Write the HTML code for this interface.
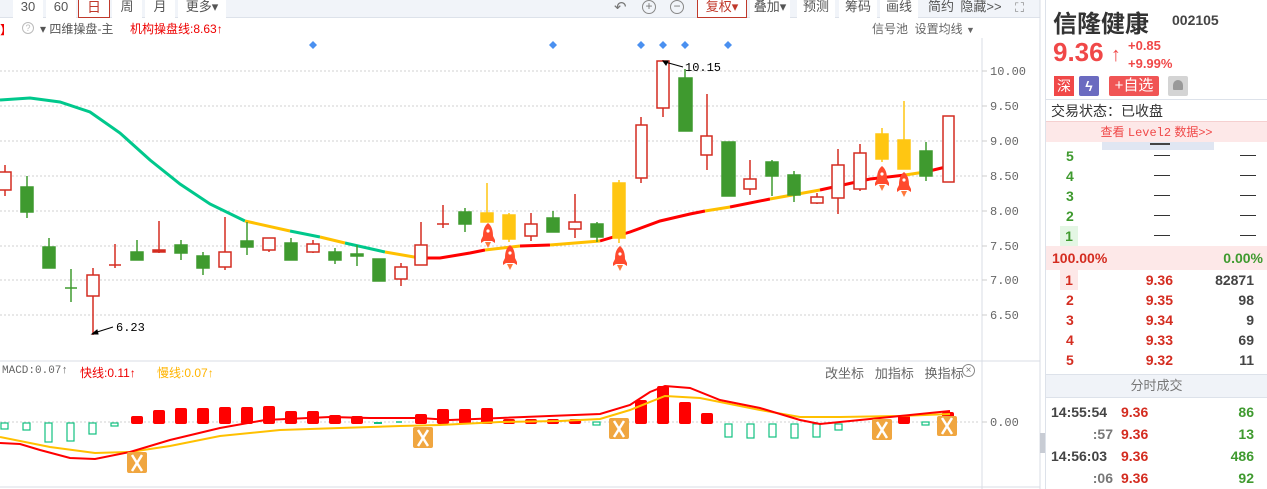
<!DOCTYPE html>
<html><head><meta charset="utf-8"><style>
*{margin:0;padding:0;box-sizing:border-box}
body{width:1267px;height:489px;overflow:hidden;background:#fff;font-family:"Liberation Sans","Noto Sans CJK SC",sans-serif;position:relative;color:#333}
.a{position:absolute;white-space:nowrap}
.tb{position:absolute;top:0;height:18px;background:#fff;font-size:13px;color:#555;text-align:center;line-height:14px}
.r{color:#d42c20}.g{color:#3f9a2f}
.row{position:absolute;left:1046px;width:221px;height:20px;font-size:14px;font-weight:bold;line-height:20px}
.row span{position:absolute}
</style></head><body>
<div class="a" style="left:0;top:0;width:1040px;height:18px;background:#f1f4f9;border-bottom:1px solid #dde2ea"></div>
<div class="tb" style="left:13px;width:30px">30</div>
<div class="tb" style="left:46px;width:30px">60</div>
<div class="tb" style="left:78px;width:32px;border:1px solid #c0392b;border-top:none;color:#c0392b;font-size:14px">日</div>
<div class="tb" style="left:112px;width:30px">周</div>
<div class="tb" style="left:145px;width:30px">月</div>
<div class="tb" style="left:178px;width:48px">更多▾</div>
<div class="a" style="left:614px;top:-2px;font-size:15px;color:#777">↶</div>
<div class="a" style="left:642px;top:0;width:14px;height:14px;border:1px solid #888;border-radius:50%;font-size:12px;line-height:11px;text-align:center;color:#777">+</div>
<div class="a" style="left:670px;top:0;width:14px;height:14px;border:1px solid #888;border-radius:50%;font-size:12px;line-height:11px;text-align:center;color:#777">−</div>
<div class="tb" style="left:697px;width:50px;border:1px solid #c0392b;border-top:none;color:#c0392b">复权▾</div>
<div class="tb" style="left:750px;width:40px">叠加▾</div>
<div class="tb" style="left:797px;width:38px">预测</div>
<div class="tb" style="left:839px;width:38px">筹码</div>
<div class="tb" style="left:880px;width:38px">画线</div>
<div class="tb" style="left:922px;width:38px;background:transparent">简约</div>
<div class="tb" style="left:958px;width:46px;background:transparent">隐藏&gt;&gt;</div>
<div class="a" style="left:1015px;top:0;font-size:13px;color:#888">⛶</div>
<div class="a" style="left:0;top:21px;font-size:12px;color:#e00">】</div>
<div class="a" style="left:22px;top:22px;width:12px;height:12px;border:1px solid #bbb;border-radius:50%;font-size:9px;color:#bbb;text-align:center;line-height:10px">?</div>
<div class="a" style="left:40px;top:20px;font-size:12px;color:#555">▾ 四维操盘-主</div>
<div class="a" style="left:130px;top:20px;font-size:12px;color:#e00">机构操盘线:8.63↑</div>
<div class="a" style="left:872px;top:20px;font-size:12px;color:#666">信号池&nbsp; 设置均线 <span style="font-size:9px">▼</span></div>
<svg class="a" style="left:0;top:0" width="1045" height="489">
<defs>
<g id="rk"><path d="M0 -11c4 3 5 8 5 13l2 4v3l-3-2h-8l-3 2v-3l2-4c0-5 1-10 5-13z" fill="#ff4a2e"/><circle cx="0" cy="-3" r="1.6" fill="#fff"/><path d="M-3 8h6l-3 6z" fill="#ff7a3e"/></g>
</defs>
<g stroke="#d0d0d0" stroke-dasharray="2,2" stroke-width="1">
<line x1="0" y1="71" x2="980" y2="71"/><line x1="0" y1="106" x2="980" y2="106"/><line x1="0" y1="141" x2="980" y2="141"/><line x1="0" y1="176" x2="980" y2="176"/><line x1="0" y1="211" x2="980" y2="211"/><line x1="0" y1="246" x2="980" y2="246"/><line x1="0" y1="280" x2="980" y2="280"/><line x1="0" y1="315" x2="980" y2="315"/><line x1="0" y1="422" x2="980" y2="422"/>
</g>
<line x1="982" y1="38" x2="982" y2="489" stroke="#d8dce4"/>
<line x1="1040" y1="0" x2="1040" y2="489" stroke="#d8dce4"/>
<line x1="0" y1="361" x2="1040" y2="361" stroke="#d8dce4"/>
<line x1="0" y1="487" x2="1040" y2="487" stroke="#d8dce4"/>
<g stroke="#ccc"><line x1="982" y1="71" x2="987" y2="71"/><line x1="982" y1="106" x2="987" y2="106"/><line x1="982" y1="141" x2="987" y2="141"/><line x1="982" y1="176" x2="987" y2="176"/><line x1="982" y1="211" x2="987" y2="211"/><line x1="982" y1="246" x2="987" y2="246"/><line x1="982" y1="280" x2="987" y2="280"/><line x1="982" y1="315" x2="987" y2="315"/><line x1="982" y1="422" x2="987" y2="422"/></g>
<g font-family="Liberation Mono,monospace" font-size="12" fill="#666">
<text x="990" y="75">10.00</text><text x="990" y="110">9.50</text><text x="990" y="145">9.00</text><text x="990" y="180">8.50</text><text x="990" y="215">8.00</text><text x="990" y="250">7.50</text><text x="990" y="284">7.00</text><text x="990" y="319">6.50</text><text x="990" y="426">0.00</text>
</g>
<g fill="#4a90f0"><path d="M313 41l4 4-4 4-4-4z"/><path d="M553 41l4 4-4 4-4-4z"/><path d="M641 41l4 4-4 4-4-4z"/><path d="M663 41l4 4-4 4-4-4z"/><path d="M685 41l4 4-4 4-4-4z"/><path d="M728 41l4 4-4 4-4-4z"/></g>
<polyline fill="none" stroke="#00c88c" stroke-width="3" points="0,100 30,98 60,102 90,112 120,133 150,160 180,184 210,204 245,221"/>
<polyline fill="none" stroke="#ffc000" stroke-width="3" points="245,221 290,231"/>
<polyline fill="none" stroke="#00c88c" stroke-width="3" points="290,231 320,237"/>
<polyline fill="none" stroke="#ffc000" stroke-width="3" points="320,237 345,243"/>
<polyline fill="none" stroke="#00c88c" stroke-width="3" points="345,243 385,252"/>
<polyline fill="none" stroke="#ffc000" stroke-width="3" points="385,252 420,258"/>
<polyline fill="none" stroke="#f00" stroke-width="3" points="420,258 440,258 470,253 485,250"/>
<polyline fill="none" stroke="#ffc000" stroke-width="3" points="485,250 520,246"/>
<polyline fill="none" stroke="#f00" stroke-width="3" points="520,246 550,245"/>
<polyline fill="none" stroke="#ffc000" stroke-width="3" points="550,245 600,241"/>
<polyline fill="none" stroke="#f00" stroke-width="3" points="600,241 630,232 660,221 690,214 705,211"/>
<polyline fill="none" stroke="#ffc000" stroke-width="3" points="705,211 730,207"/>
<polyline fill="none" stroke="#f00" stroke-width="3" points="730,207 770,199"/>
<polyline fill="none" stroke="#ffc000" stroke-width="3" points="770,199 820,190"/>
<polyline fill="none" stroke="#f00" stroke-width="3" points="820,190 870,179 905,175"/>
<polyline fill="none" stroke="#ffc000" stroke-width="3" points="905,175 925,172"/>
<polyline fill="none" stroke="#f00" stroke-width="3" points="925,172 950,166"/>
<g stroke-width="1.5">
<g stroke="#d42c20" fill="#fff">
<line x1="5" y1="165" x2="5" y2="196"/><rect x="-1" y="172" width="12" height="18"/>
<line x1="93" y1="268" x2="93" y2="335"/><rect x="87" y="275" width="12" height="21"/>
<line x1="115" y1="244" x2="115" y2="268"/><line x1="109" y1="265" x2="121" y2="265"/>
<line x1="159" y1="221" x2="159" y2="253"/><rect x="153" y="250" width="12" height="2" fill="#d42c20"/>
<line x1="225" y1="217" x2="225" y2="270"/><rect x="219" y="252" width="12" height="15"/>
<line x1="269" y1="238" x2="269" y2="252"/><rect x="263" y="238" width="12" height="12"/>
<line x1="313" y1="240" x2="313" y2="253"/><rect x="307" y="244" width="12" height="8"/>
<line x1="401" y1="263" x2="401" y2="286"/><rect x="395" y="267" width="12" height="12"/>
<line x1="421" y1="222" x2="421" y2="265"/><rect x="415" y="245" width="12" height="20"/>
<line x1="443" y1="205" x2="443" y2="228"/><line x1="437" y1="224" x2="449" y2="224"/>
<line x1="531" y1="213" x2="531" y2="241"/><rect x="525" y="224" width="12" height="12"/>
<line x1="575" y1="194" x2="575" y2="238"/><rect x="569" y="222" width="12" height="7"/>
<line x1="641" y1="117" x2="641" y2="183"/><rect x="636" y="125" width="11" height="53"/>
<line x1="663" y1="60" x2="663" y2="117"/><rect x="657" y="61" width="12" height="47"/>
<line x1="707" y1="94" x2="707" y2="170"/><rect x="701" y="136" width="11" height="19"/>
<line x1="750" y1="160" x2="750" y2="195"/><rect x="744" y="179" width="12" height="10"/>
<line x1="817" y1="193" x2="817" y2="204"/><rect x="811" y="197" width="12" height="6"/>
<line x1="838" y1="149" x2="838" y2="214"/><rect x="832" y="165" width="12" height="33"/>
<line x1="860" y1="144" x2="860" y2="191"/><rect x="854" y="153" width="12" height="36"/>
<rect x="943" y="116" width="11" height="66"/>
</g>
<g stroke="#3f9a2f" fill="#3f9a2f">
<line x1="27" y1="176" x2="27" y2="218"/><rect x="21" y="187" width="12" height="25"/>
<line x1="49" y1="238" x2="49" y2="268"/><rect x="43" y="247" width="12" height="21"/>
<line x1="71" y1="269" x2="71" y2="302"/><line x1="65" y1="288" x2="77" y2="288"/>
<line x1="137" y1="240" x2="137" y2="260"/><rect x="131" y="252" width="12" height="8"/>
<line x1="181" y1="240" x2="181" y2="260"/><rect x="175" y="245" width="12" height="8"/>
<line x1="203" y1="252" x2="203" y2="275"/><rect x="197" y="256" width="12" height="12"/>
<line x1="247" y1="222" x2="247" y2="255"/><rect x="241" y="241" width="12" height="6"/>
<line x1="291" y1="238" x2="291" y2="260"/><rect x="285" y="243" width="12" height="17"/>
<line x1="335" y1="248" x2="335" y2="264"/><rect x="329" y="252" width="12" height="8"/>
<line x1="357" y1="245" x2="357" y2="266"/><rect x="351" y="254" width="12" height="2"/>
<rect x="373" y="259" width="12" height="22"/>
<line x1="465" y1="208" x2="465" y2="232"/><rect x="459" y="212" width="12" height="12"/>
<line x1="553" y1="211" x2="553" y2="232"/><rect x="547" y="218" width="12" height="14"/>
<line x1="597" y1="222" x2="597" y2="242"/><rect x="591" y="224" width="12" height="13"/>
<line x1="685" y1="69" x2="685" y2="80"/><rect x="679" y="78" width="13" height="53"/>
<rect x="722" y="142" width="13" height="54"/>
<line x1="772" y1="160" x2="772" y2="196"/><rect x="766" y="162" width="12" height="14"/>
<line x1="794" y1="171" x2="794" y2="202"/><rect x="788" y="175" width="12" height="20"/>
<line x1="926" y1="142" x2="926" y2="181"/><rect x="920" y="151" width="12" height="25"/>
</g>
<g stroke="#ffc612" fill="#ffc612">
<line x1="487" y1="183" x2="487" y2="222"/><rect x="481" y="213" width="12" height="9"/>
<line x1="509" y1="213" x2="509" y2="242"/><rect x="503" y="215" width="12" height="24"/>
<line x1="619" y1="180" x2="619" y2="243"/><rect x="613" y="183" width="12" height="55"/>
<line x1="882" y1="128" x2="882" y2="162"/><rect x="876" y="134" width="12" height="25"/>
<line x1="904" y1="101" x2="904" y2="169"/><rect x="898" y="140" width="12" height="29"/>
</g>
</g>
<g stroke="#000" fill="#000" stroke-width="1"><line x1="94" y1="333" x2="113" y2="327"/><path d="M92 334l5-4 1 4z"/><line x1="665" y1="62" x2="683" y2="67"/><path d="M663 61l5 0-2 4z"/></g>
<text x="116" y="331" font-family="Liberation Mono,monospace" font-size="12" fill="#000">6.23</text>
<text x="685" y="71" font-family="Liberation Mono,monospace" font-size="12" fill="#000">10.15</text>
<use href="#rk" x="488" y="234"/><use href="#rk" x="510" y="256"/><use href="#rk" x="620" y="257"/><use href="#rk" x="882" y="177"/><use href="#rk" x="904" y="183"/>
<g fill="#f00">
<rect x="131" y="416" width="12" height="8" rx="2"/><rect x="153" y="410" width="12" height="14" rx="2"/><rect x="175" y="408" width="12" height="16" rx="2"/><rect x="197" y="408" width="12" height="16" rx="2"/><rect x="219" y="407" width="12" height="17" rx="2"/><rect x="241" y="407" width="12" height="17" rx="2"/><rect x="263" y="406" width="12" height="18" rx="2"/><rect x="285" y="411" width="12" height="13" rx="2"/><rect x="307" y="411" width="12" height="13" rx="2"/><rect x="329" y="415" width="12" height="9" rx="2"/><rect x="351" y="416" width="12" height="8" rx="2"/>
<rect x="415" y="414" width="12" height="10" rx="2"/><rect x="437" y="409" width="12" height="15" rx="2"/><rect x="459" y="409" width="12" height="15" rx="2"/><rect x="481" y="408" width="12" height="16" rx="2"/><rect x="503" y="419" width="12" height="5" rx="2"/><rect x="525" y="419" width="12" height="5" rx="2"/><rect x="547" y="419" width="12" height="5" rx="2"/><rect x="569" y="419" width="12" height="5" rx="2"/>
<rect x="635" y="400" width="12" height="24" rx="2"/><rect x="657" y="386" width="12" height="38" rx="2"/><rect x="679" y="402" width="12" height="22" rx="2"/><rect x="701" y="413" width="12" height="11" rx="2"/>
<rect x="898" y="415" width="12" height="9" rx="2"/><rect x="942" y="412" width="12" height="12" rx="2"/>
</g>
<g fill="none" stroke="#10c080" stroke-width="1.2">
<rect x="1" y="423" width="7" height="6"/><rect x="23" y="423" width="7" height="7"/><rect x="45" y="423" width="7" height="19"/><rect x="67" y="423" width="7" height="18"/><rect x="89" y="423" width="7" height="11"/><rect x="111" y="423" width="7" height="3"/>
<line x1="374" y1="423" x2="382" y2="423" stroke-width="2"/><line x1="396" y1="422" x2="402" y2="422" stroke-width="1.5"/><rect x="593" y="422" width="7" height="3"/>
<rect x="725" y="424" width="7" height="13"/><rect x="747" y="424" width="7" height="14"/><rect x="769" y="424" width="7" height="13"/><rect x="791" y="424" width="7" height="14"/><rect x="813" y="424" width="7" height="13"/><rect x="835" y="424" width="7" height="6"/><rect x="922" y="422" width="7" height="3"/>
</g>
<polyline fill="none" stroke="#ffc000" stroke-width="2" points="0,437 50,447 95,453 130,452 170,446 220,436 280,430 340,428 400,426 440,425 500,422 560,421 600,419 630,410 665,396 700,398 760,410 800,417 840,417 900,416 950,414"/>
<polyline fill="none" stroke="#f00" stroke-width="2" points="0,443 20,444 40,450 70,458 95,459 130,452 170,440 220,428 265,420 330,417 370,418 420,418 450,420 500,418 600,414 630,405 650,392 665,386 690,388 720,400 760,408 800,420 820,424 860,420 900,416 950,411"/>
<g fill="#f0a640">
<rect x="127" y="452" width="20" height="21" rx="2"/><rect x="413" y="427" width="20" height="21" rx="2"/><rect x="609" y="418" width="20" height="21" rx="2"/><rect x="872" y="419" width="20" height="21" rx="2"/><rect x="937" y="416" width="20" height="20" rx="2"/>
</g>
<g stroke="#fff" stroke-width="2.5" fill="none">
<path d="M132 455l5 8-5 8M142 455l-5 8 5 8"/><path d="M418 430l5 8-5 8M428 430l-5 8 5 8"/><path d="M614 421l5 8-5 8M624 421l-5 8 5 8"/><path d="M877 422l5 8-5 8M887 422l-5 8 5 8"/><path d="M942 418l5 8-5 8M952 418l-5 8 5 8"/>
</g>
</svg>
<div class="a" style="left:2px;top:365px;font-family:'Liberation Mono',monospace;font-size:11px;color:#666">MACD:0.07↑</div>
<div class="a" style="left:80px;top:364px;font-size:12px;color:#e00">快线:0.11↑</div>
<div class="a" style="left:157px;top:364px;font-size:12px;color:#ffb400">慢线:0.07↑</div>
<div class="a" style="left:825px;top:363px;font-size:13px;color:#666">改坐标&nbsp;&nbsp; 加指标&nbsp;&nbsp; 换指标</div>
<div class="a" style="left:962px;top:364px;width:13px;height:13px;border:1px solid #888;border-radius:50%;font-size:10px;line-height:11px;text-align:center;color:#777">×</div>
<div class="a" style="left:1040px;top:433px;width:5px;height:20px;background:#c8ccd4"></div>
<div class="a" style="left:1045px;top:0;width:1px;height:489px;background:#dde2ea"></div>
<div class="a" style="left:1053px;top:4px;font-size:24px;font-weight:bold;color:#333">信隆健康</div>
<div class="a" style="left:1172px;top:12px;font-size:14px;font-weight:bold;color:#444">002105</div>
<div class="a" style="left:1053px;top:37px;font-size:26px;font-weight:bold;color:#f04848">9.36 <span style="font-size:20px">↑</span></div>
<div class="a" style="left:1128px;top:38px;font-size:13px;font-weight:bold;color:#f04848">+0.85</div>
<div class="a" style="left:1128px;top:56px;font-size:13px;font-weight:bold;color:#f04848">+9.99%</div>
<div class="a" style="left:1054px;top:76px;width:20px;height:20px;background:#f04848;color:#fff;font-size:14px;line-height:20px;text-align:center">深</div>
<div class="a" style="left:1079px;top:76px;width:20px;height:20px;background:#6b6bc0;color:#fff;font-size:14px;font-weight:bold;line-height:20px;text-align:center;border-radius:2px">ϟ</div>
<div class="a" style="left:1109px;top:76px;width:50px;height:20px;background:#f05555;color:#fff;font-size:15px;line-height:20px;text-align:center;border-radius:2px">+自选</div>
<div class="a" style="left:1168px;top:76px;width:20px;height:20px;background:#d4d4d4;border-radius:2px"></div>
<div class="a" style="left:1173px;top:80px;width:10px;height:10px;background:#999;border-radius:5px 5px 1px 1px"></div>
<div class="a" style="left:1046px;top:99px;width:221px;height:1px;background:#dde2ea"></div>
<div class="a" style="left:1051px;top:101px;font-size:14px;color:#333">交易状态：已收盘</div>
<div class="a" style="left:1046px;top:121px;width:221px;height:21px;background:#fde8e8;border-top:1px solid #f5d0d0;color:#f04848;font-size:12px;line-height:20px;text-align:center">查看 <span style="font-family:'Liberation Mono',monospace">Level2</span> 数据&gt;&gt;</div>
<div class="a" style="left:1102px;top:142px;width:112px;height:8px;background:#e0e6f2"></div>
<div class="a" style="left:1150px;top:143px;width:20px;height:2px;background:#444"></div>
<div class="row" style="top:146px"><span class="g" style="left:20px">5</span><span style="left:108px;top:9px;width:16px;height:1px;background:#333"></span><span style="left:194px;top:9px;width:16px;height:1px;background:#333"></span></div>
<div class="row" style="top:166px"><span class="g" style="left:20px">4</span><span style="left:108px;top:9px;width:16px;height:1px;background:#333"></span><span style="left:194px;top:9px;width:16px;height:1px;background:#333"></span></div>
<div class="row" style="top:186px"><span class="g" style="left:20px">3</span><span style="left:108px;top:9px;width:16px;height:1px;background:#333"></span><span style="left:194px;top:9px;width:16px;height:1px;background:#333"></span></div>
<div class="row" style="top:206px"><span class="g" style="left:20px">2</span><span style="left:108px;top:9px;width:16px;height:1px;background:#333"></span><span style="left:194px;top:9px;width:16px;height:1px;background:#333"></span></div>
<div class="row" style="top:226px"><span class="g" style="left:14px;width:18px;text-align:center;background:#e4f6e4">1</span><span style="left:108px;top:9px;width:16px;height:1px;background:#333"></span><span style="left:194px;top:9px;width:16px;height:1px;background:#333"></span></div>
<div class="row" style="top:246px;height:24px;background:#fde8e8;line-height:24px"><span class="r" style="left:6px">100.00%</span><span class="g" style="right:4px">0.00%</span></div>
<div class="row" style="top:270px"><span class="r" style="left:14px;width:18px;text-align:center;background:#fde8e8">1</span><span class="r" style="right:94px">9.36</span><span style="right:13px;color:#444">82871</span></div>
<div class="row" style="top:290px"><span class="r" style="left:20px">2</span><span class="r" style="right:94px">9.35</span><span style="right:13px;color:#444">98</span></div>
<div class="row" style="top:310px"><span class="r" style="left:20px">3</span><span class="r" style="right:94px">9.34</span><span style="right:13px;color:#444">9</span></div>
<div class="row" style="top:330px"><span class="r" style="left:20px">4</span><span class="r" style="right:94px">9.33</span><span style="right:13px;color:#444">69</span></div>
<div class="row" style="top:350px"><span class="r" style="left:20px">5</span><span class="r" style="right:94px">9.32</span><span style="right:13px;color:#444">11</span></div>
<div class="a" style="left:1046px;top:374px;width:221px;height:24px;background:#f0f3f8;border-top:1px solid #dde2ea;border-bottom:1px solid #dde2ea;color:#777;font-size:13px;line-height:22px;text-align:center">分时成交</div>
<div class="row" style="top:401px;height:22px;line-height:22px"><span style="left:5px;color:#444">14:55:54</span><span class="r" style="left:75px">9.36</span><span class="g" style="right:13px">86</span></div>
<div class="row" style="top:423px;height:22px;line-height:22px"><span style="right:154px;color:#777">:57</span><span class="r" style="left:75px">9.36</span><span class="g" style="right:13px">13</span></div>
<div class="row" style="top:445px;height:22px;line-height:22px"><span style="left:5px;color:#444">14:56:03</span><span class="r" style="left:75px">9.36</span><span class="g" style="right:13px">486</span></div>
<div class="row" style="top:467px;height:22px;line-height:22px"><span style="right:154px;color:#777">:06</span><span class="r" style="left:75px">9.36</span><span class="g" style="right:13px">92</span></div>
</body></html>
